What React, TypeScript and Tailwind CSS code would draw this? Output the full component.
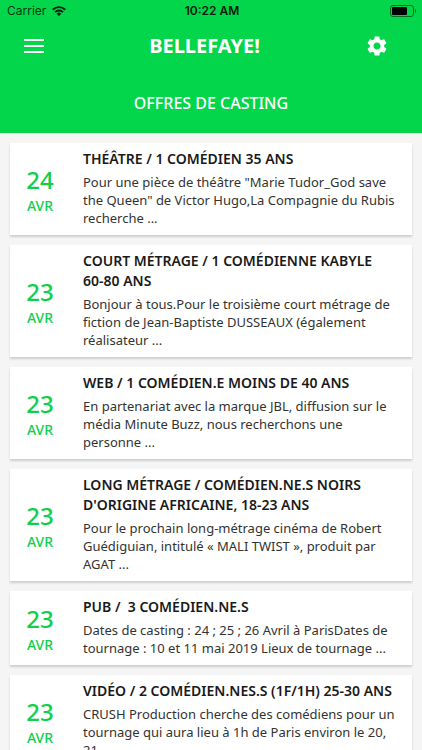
import { MdSettings } from "react-icons/md";

type Offer = {
  id: number;
  day: string;
  month: string;
  title: string;
  excerpt: string;
};

const offers: Offer[] = [
  {
    id: 1,
    day: "24",
    month: "AVR",
    title: "THÉÂTRE / 1 COMÉDIEN 35 ANS",
    excerpt:
      'Pour une pièce de théâtre "Marie Tudor_God save the Queen" de Victor Hugo,La Compagnie du Rubis recherche ...',
  },
  {
    id: 2,
    day: "23",
    month: "AVR",
    title: "COURT MÉTRAGE / 1 COMÉDIENNE KABYLE 60-80 ANS",
    excerpt:
      "Bonjour à tous.Pour le troisième court métrage de fiction de Jean-Baptiste DUSSEAUX (également réalisateur ...",
  },
  {
    id: 3,
    day: "23",
    month: "AVR",
    title: "WEB / 1 COMÉDIEN.E MOINS DE 40 ANS",
    excerpt:
      "En partenariat avec la marque JBL, diffusion sur le média Minute Buzz, nous recherchons une personne ...",
  },
  {
    id: 4,
    day: "23",
    month: "AVR",
    title: "LONG MÉTRAGE / COMÉDIEN.NE.S NOIRS D'ORIGINE AFRICAINE, 18-23 ANS",
    excerpt:
      "Pour le prochain long-métrage cinéma de Robert Guédiguian, intitulé « MALI TWIST », produit par AGAT ...",
  },
  {
    id: 5,
    day: "23",
    month: "AVR",
    title: "PUB /  3 COMÉDIEN.NE.S",
    excerpt:
      "Dates de casting : 24 ; 25 ; 26 Avril à ParisDates de tournage : 10 et 11 mai 2019 Lieux de tournage ...",
  },
  {
    id: 6,
    day: "23",
    month: "AVR",
    title: "VIDÉO / 2 COMÉDIEN.NES.S (1F/1H) 25-30 ANS",
    excerpt:
      "CRUSH Production cherche des comédiens pour un tournage qui aura lieu à 1h de Paris environ le 20, 21 ...",
  },
];

function StatusBar() {
  return (
    <div className="grid grid-cols-3 items-center h-[22px] pl-[7px] pr-[5px] font-['Inter',sans-serif] text-[12px] leading-4 text-[#063814]">
      <div className="flex items-center gap-1.5">
        <span>Carrier</span>
        <svg viewBox="0 0 14 10" className="w-3.5 h-2.5" aria-hidden="true">
          <g fill="none" stroke="#031b0a" strokeWidth="1.9">
            <path d="M.7 3.7C4.2.3 9.8.3 13.3 3.7" />
            <path d="M3 6.1C5.2 4 8.8 4 11 6.1" />
          </g>
          <path d="M7 10 4.7 7.7a3.3 3.3 0 0 1 4.6 0z" fill="#031b0a" />
        </svg>
      </div>
      <span className="text-center font-semibold text-[#031b0a]">10:22 AM</span>
      <svg
        viewBox="0 0 27 12"
        className="w-[27px] h-3 justify-self-end"
        aria-hidden="true"
      >
        <rect
          x=".5"
          y=".5"
          width="23"
          height="11"
          rx="2.5"
          fill="none"
          stroke="#04701f"
        />
        <rect x="2" y="2" width="15" height="8" rx="1" fill="#000" />
        <path d="M25 4v4c1.4-.6 1.4-3.4 0-4z" fill="#04701f" />
      </svg>
    </div>
  );
}

function OfferCard({ offer }: { offer: Offer }) {
  return (
    <li className="flex bg-white shadow-[0_2px_2px_rgba(0,0,0,0.16)] pt-1.5 pb-2 pr-3">
      <div className="flex flex-col shrink-0 items-center justify-center w-[60px] pt-2 mr-[13px] text-[#0fcf4c]">
        <span className="text-[24px] leading-7 font-medium">{offer.day}</span>
        <span className="text-[14px] leading-6 font-medium">{offer.month}</span>
      </div>
      <div className="flex flex-col gap-1 min-w-0 flex-1">
        <h2 className="pr-1.5 text-[14px] leading-5 font-semibold whitespace-pre-wrap text-[#1a1a1a]">
          {offer.title}
        </h2>
        <p className="text-[13px] leading-[18px] text-[#333]">
          {offer.excerpt}
        </p>
      </div>
    </li>
  );
}

export default function App() {
  return (
    <div className="h-screen overflow-hidden bg-[#f5f5f5] font-['Noto_Sans','Open_Sans',sans-serif]">
      <header className="bg-[#04d64b] text-white pb-[18px]">
        <StatusBar />
        <div className="flex items-center justify-between h-12 pl-6 pr-[33px]">
          <button type="button" aria-label="Menu">
            <svg viewBox="0 0 20 14" className="w-5 h-3.5" fill="#fff">
              <path d="M0 0h20v2H0zM0 6h20v2H0zM0 12h20v2H0z" />
            </svg>
          </button>
          <h1 className="text-[20px] leading-6 font-bold">BELLEFAYE!</h1>
          <button type="button" aria-label="Paramètres">
            <MdSettings className="size-6" />
          </button>
        </div>
        <p className="pt-[21px] text-center text-[16px] leading-6 font-medium">
          OFFRES DE CASTING
        </p>
      </header>
      <ul className="flex flex-col gap-2.5 p-2.5">
        {offers.map((offer) => (
          <OfferCard key={offer.id} offer={offer} />
        ))}
      </ul>
    </div>
  );
}
